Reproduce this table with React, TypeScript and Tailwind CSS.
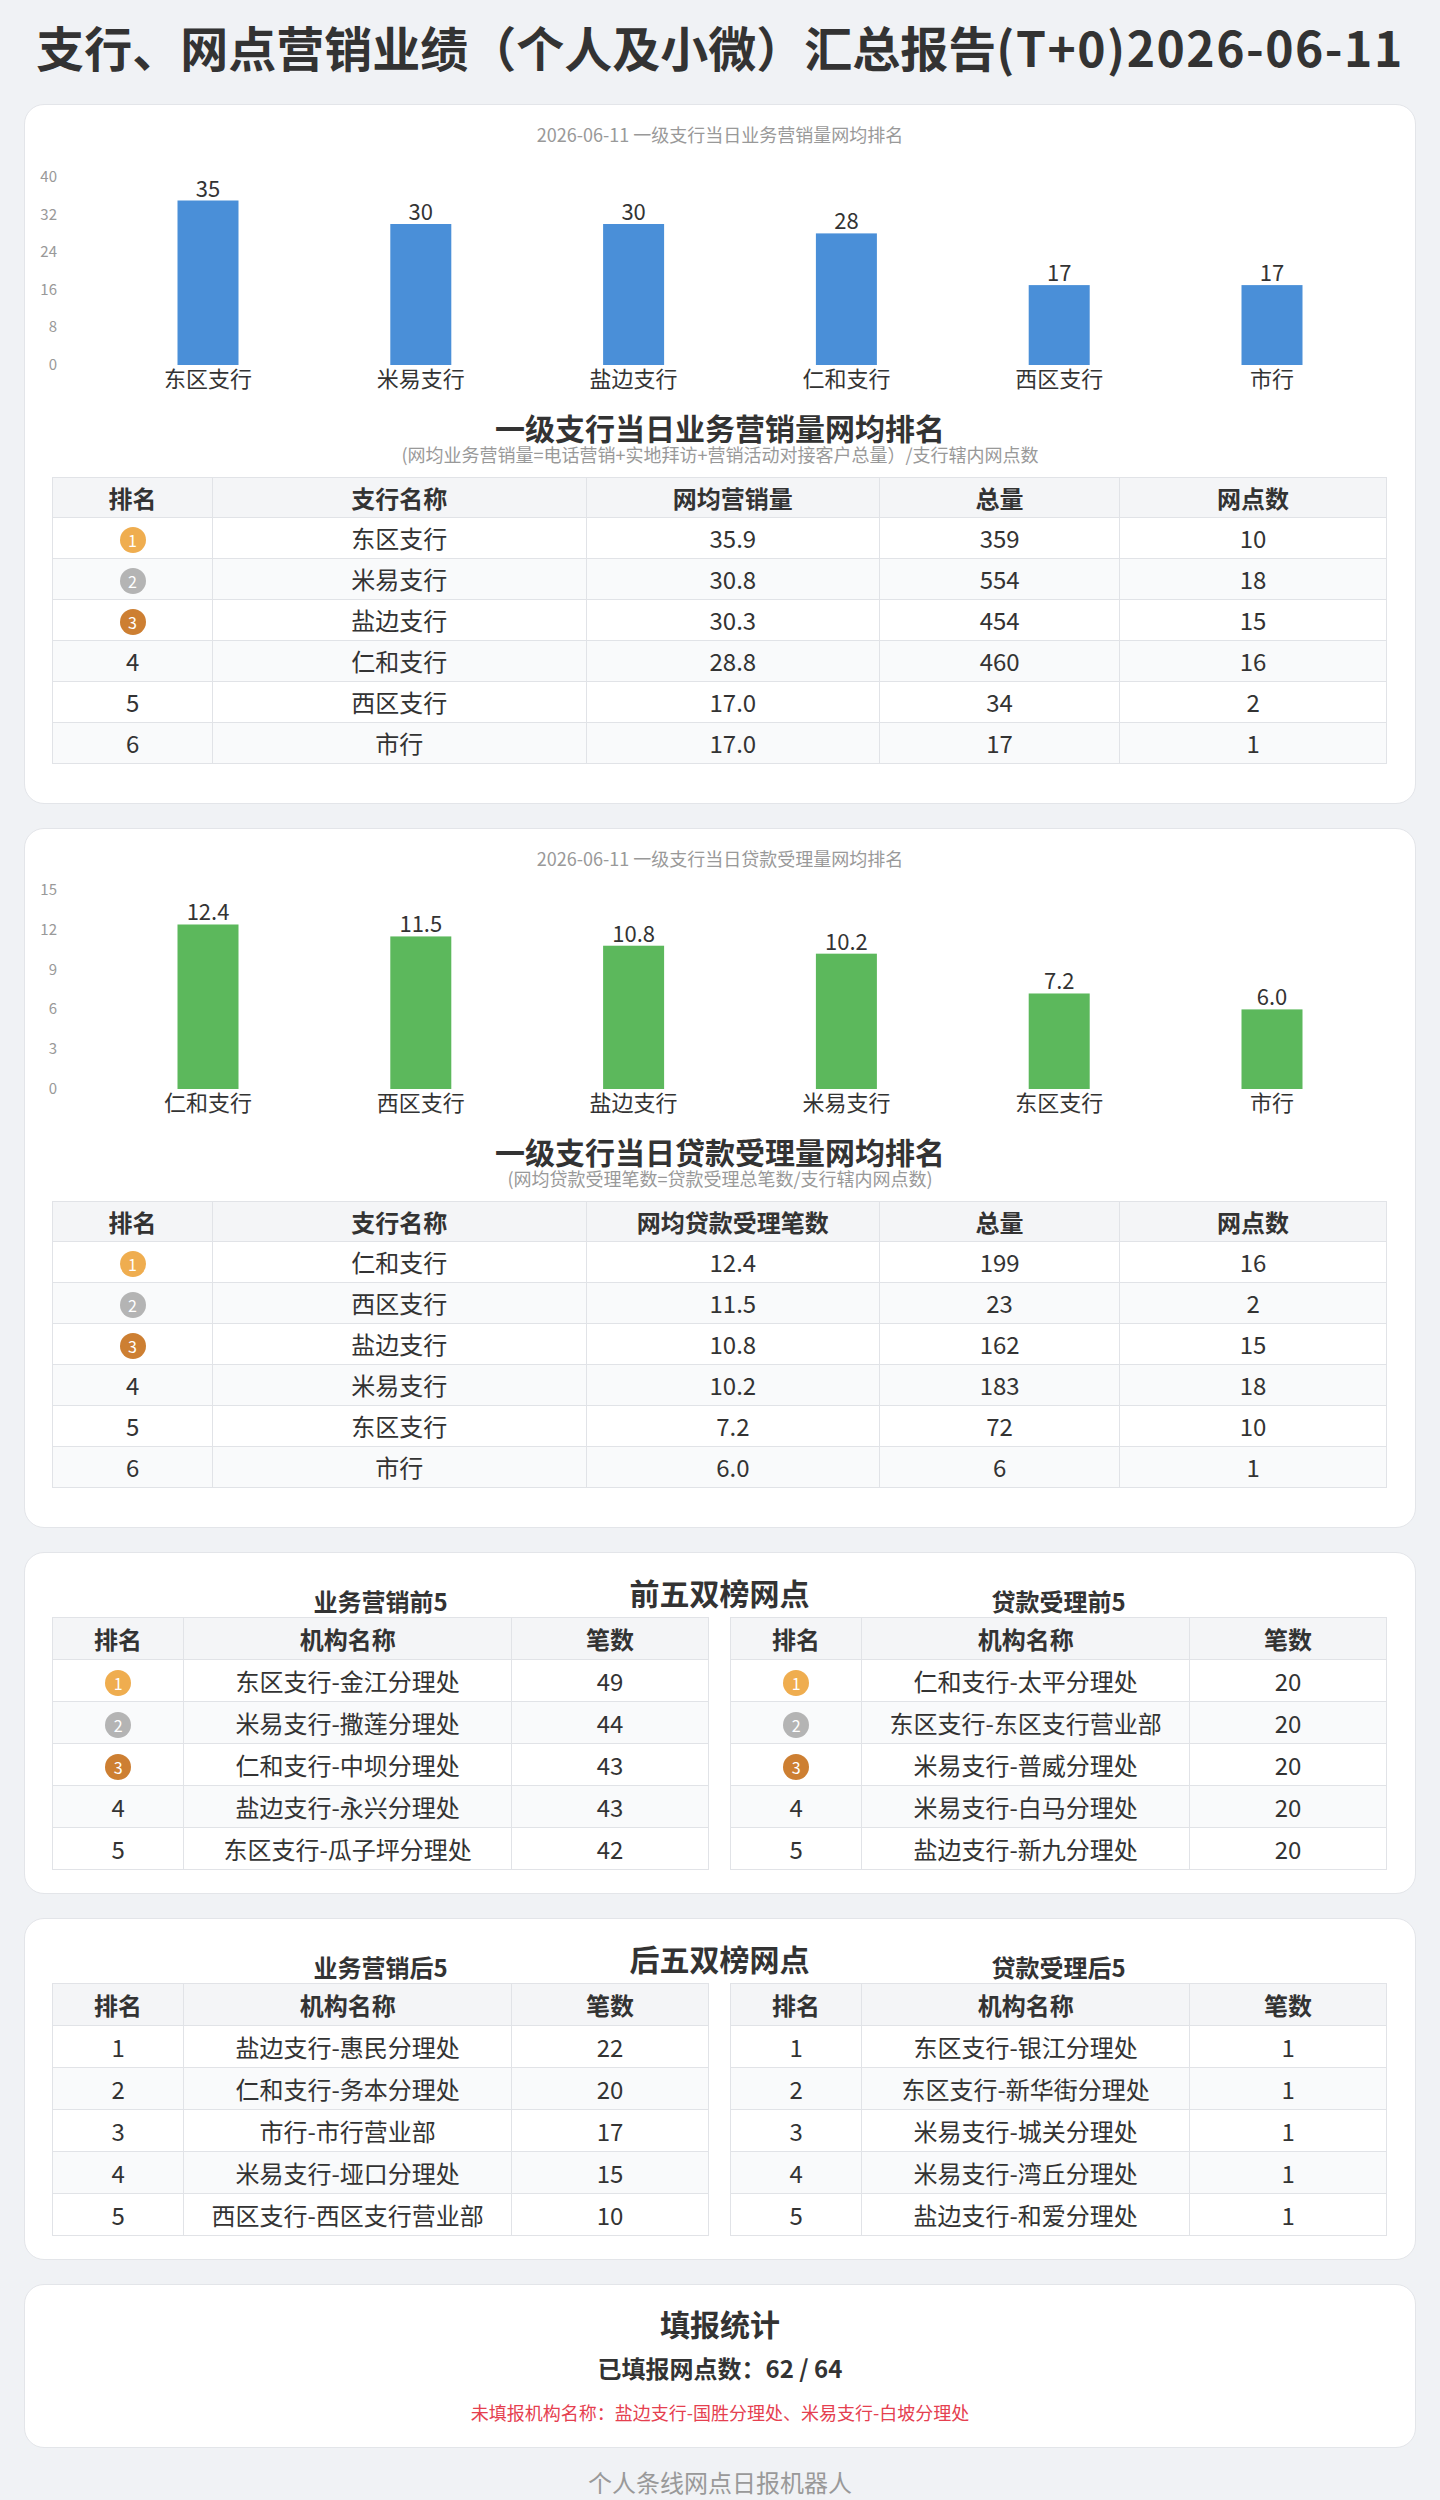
import React from 'react';

type ChartItem = { name: string; value: number; label: string };

type BranchRow = { name: string; avg: string; total: number; count: number };

type OutletRow = { name: string; count: number };

const salesChart: ChartItem[] = [
    { name: '东区支行', value: 35, label: '35' },
    { name: '米易支行', value: 30, label: '30' },
    { name: '盐边支行', value: 30, label: '30' },
    { name: '仁和支行', value: 28, label: '28' },
    { name: '西区支行', value: 17, label: '17' },
    { name: '市行', value: 17, label: '17' },
];

const loanChart: ChartItem[] = [
    { name: '仁和支行', value: 12.4, label: '12.4' },
    { name: '西区支行', value: 11.5, label: '11.5' },
    { name: '盐边支行', value: 10.8, label: '10.8' },
    { name: '米易支行', value: 10.2, label: '10.2' },
    { name: '东区支行', value: 7.2, label: '7.2' },
    { name: '市行', value: 6.0, label: '6.0' },
];

const salesRows: BranchRow[] = [
    { name: '东区支行', avg: '35.9', total: 359, count: 10 },
    { name: '米易支行', avg: '30.8', total: 554, count: 18 },
    { name: '盐边支行', avg: '30.3', total: 454, count: 15 },
    { name: '仁和支行', avg: '28.8', total: 460, count: 16 },
    { name: '西区支行', avg: '17.0', total: 34, count: 2 },
    { name: '市行', avg: '17.0', total: 17, count: 1 },
];

const loanRows: BranchRow[] = [
    { name: '仁和支行', avg: '12.4', total: 199, count: 16 },
    { name: '西区支行', avg: '11.5', total: 23, count: 2 },
    { name: '盐边支行', avg: '10.8', total: 162, count: 15 },
    { name: '米易支行', avg: '10.2', total: 183, count: 18 },
    { name: '东区支行', avg: '7.2', total: 72, count: 10 },
    { name: '市行', avg: '6.0', total: 6, count: 1 },
];

const salesTop: OutletRow[] = [
    { name: '东区支行-金江分理处', count: 49 },
    { name: '米易支行-撒莲分理处', count: 44 },
    { name: '仁和支行-中坝分理处', count: 43 },
    { name: '盐边支行-永兴分理处', count: 43 },
    { name: '东区支行-瓜子坪分理处', count: 42 },
];

const loanTop: OutletRow[] = [
    { name: '仁和支行-太平分理处', count: 20 },
    { name: '东区支行-东区支行营业部', count: 20 },
    { name: '米易支行-普威分理处', count: 20 },
    { name: '米易支行-白马分理处', count: 20 },
    { name: '盐边支行-新九分理处', count: 20 },
];

const salesBottom: OutletRow[] = [
    { name: '盐边支行-惠民分理处', count: 22 },
    { name: '仁和支行-务本分理处', count: 20 },
    { name: '市行-市行营业部', count: 17 },
    { name: '米易支行-垭口分理处', count: 15 },
    { name: '西区支行-西区支行营业部', count: 10 },
];

const loanBottom: OutletRow[] = [
    { name: '东区支行-银江分理处', count: 1 },
    { name: '东区支行-新华街分理处', count: 1 },
    { name: '米易支行-城关分理处', count: 1 },
    { name: '米易支行-湾丘分理处', count: 1 },
    { name: '盐边支行-和爱分理处', count: 1 },
];

// Rank badge: medals for the first three places
function Rank({ rank, medal }: { rank: number; medal: boolean }) {
    if (!medal || rank > 3) return <span>{rank}</span>;
    const colors: Record<number, string> = {
        1: 'bg-[#efad4f]',
        2: 'bg-[#b4b4b4]',
        3: 'bg-[#cd7f32]',
    };
    return (
        <span
            className={`inline-flex h-[26px] w-[26px] items-center justify-center rounded-full align-middle text-[16px] leading-none text-white ${colors[rank]}`}
        >
            {rank}
        </span>
    );
}

// Bar chart drawn as svg, sized to the card
function BarChart({
    title,
    data,
    color,
    max,
    axisTop,
}: {
    title: string;
    data: ChartItem[];
    color: string;
    max: number;
    axisTop: number;
}) {
    const baseline = 219;
    const span = baseline - axisTop;
    const ticks = [0, 1, 2, 3, 4, 5].map((i) => (max / 5) * i);

    return (
        <div>
            <div className="pt-[17px] text-center text-[18px] leading-[24px] text-[#999]">{title}</div>
            <svg width="1390" height="264" className="block">
                {ticks.map((t) => (
                    <text
                        key={t}
                        x={32}
                        y={baseline - (t / max) * span + 5}
                        textAnchor="end"
                        fontSize={15}
                        fill="#999"
                    >
                        {t}
                    </text>
                ))}
                {data.map((d, i) => {
                    const cx = 183 + i * 212.8;
                    const h = (d.value / max) * span;
                    return (
                        <g key={d.name}>
                            <rect x={cx - 30.5} y={baseline - h} width={61} height={h} fill={color} />
                            <text x={cx} y={baseline - h - 4} textAnchor="middle" fontSize={22} fill="#333">
                                {d.label}
                            </text>
                            <text x={cx} y={241} textAnchor="middle" fontSize={22} fill="#333">
                                {d.name}
                            </text>
                        </g>
                    );
                })}
            </svg>
        </div>
    );
}

function BranchTable({ avgHeader, rows }: { avgHeader: string; rows: BranchRow[] }) {
    return (
        <table className="w-full table-fixed border-collapse text-center text-[24px] text-[#333]">
            <colgroup>
                <col className="w-[12%]" />
                <col className="w-[28%]" />
                <col className="w-[22%]" />
                <col className="w-[18%]" />
                <col className="w-[20%]" />
            </colgroup>
            <thead>
                <tr className="h-[40px] bg-[#f4f5f7]">
                    <th className="border border-[#e1e3e7] p-0 font-bold leading-[28px]">排名</th>
                    <th className="border border-[#e1e3e7] p-0 font-bold leading-[28px]">支行名称</th>
                    <th className="border border-[#e1e3e7] p-0 font-bold leading-[28px]">{avgHeader}</th>
                    <th className="border border-[#e1e3e7] p-0 font-bold leading-[28px]">总量</th>
                    <th className="border border-[#e1e3e7] p-0 font-bold leading-[28px]">网点数</th>
                </tr>
            </thead>
            <tbody>
                {rows.map((r, i) => (
                    <tr key={r.name} className={`h-[41px] ${i % 2 === 1 ? 'bg-[#f9fafb]' : 'bg-white'}`}>
                        <td className="border border-[#e1e3e7] p-0 leading-[28px]">
                            <Rank rank={i + 1} medal />
                        </td>
                        <td className="border border-[#e1e3e7] p-0 leading-[28px]">{r.name}</td>
                        <td className="border border-[#e1e3e7] p-0 leading-[28px]">{r.avg}</td>
                        <td className="border border-[#e1e3e7] p-0 leading-[28px]">{r.total}</td>
                        <td className="border border-[#e1e3e7] p-0 leading-[28px]">{r.count}</td>
                    </tr>
                ))}
            </tbody>
        </table>
    );
}

function OutletTable({ caption, rows, medal }: { caption: string; rows: OutletRow[]; medal: boolean }) {
    return (
        <div>
            <div className="mb-[1px] text-center text-[24px] font-bold leading-[30px] text-[#333]">{caption}</div>
            <table className="w-full table-fixed border-collapse text-center text-[24px] text-[#333]">
                <colgroup>
                    <col className="w-[20%]" />
                    <col className="w-[50%]" />
                    <col className="w-[30%]" />
                </colgroup>
                <thead>
                    <tr className="h-[42px] bg-[#f4f5f7]">
                        <th className="border border-[#e1e3e7] p-0 font-bold leading-[28px]">排名</th>
                        <th className="border border-[#e1e3e7] p-0 font-bold leading-[28px]">机构名称</th>
                        <th className="border border-[#e1e3e7] p-0 font-bold leading-[28px]">笔数</th>
                    </tr>
                </thead>
                <tbody>
                    {rows.map((r, i) => (
                        <tr key={r.name} className={`h-[42px] ${i % 2 === 1 ? 'bg-[#f9fafb]' : 'bg-white'}`}>
                            <td className="border border-[#e1e3e7] p-0 leading-[28px]">
                                <Rank rank={i + 1} medal={medal} />
                            </td>
                            <td className="whitespace-nowrap border border-[#e1e3e7] p-0 leading-[28px]">{r.name}</td>
                            <td className="border border-[#e1e3e7] p-0 leading-[28px]">{r.count}</td>
                        </tr>
                    ))}
                </tbody>
            </table>
        </div>
    );
}

function Card({ children, className = '' }: { children: React.ReactNode; className?: string }) {
    return (
        <div className={`rounded-[20px] border border-[#e3e5e9] bg-white ${className}`}>{children}</div>
    );
}

export default function App() {
    return (
        <div className="min-h-screen bg-[#f0f2f5] px-6 font-['Noto_Sans_CJK_SC','Noto_Sans',sans-serif] text-[#333]">
            {/* Header */}
            <h1 className="pt-[16px] pb-[28px] text-center text-[48px] font-bold leading-[60px] text-[#333]">
                支行、网点营销业绩（个人及小微）汇总报告<span className="tracking-[1.5px]">(T+0)2026-06-11</span>
            </h1>

            <div className="flex flex-col gap-6">
                {/* Sales ranking */}
                <Card className="h-[700px]">
                    <BarChart
                        title="2026-06-11 一级支行当日业务营销量网均排名"
                        data={salesChart}
                        color="#4a8fd8"
                        max={40}
                        axisTop={31}
                    />
                    <h2 className="text-center text-[30px] font-bold leading-[34px]">一级支行当日业务营销量网均排名</h2>
                    <p className="text-center text-[18px] leading-[20px] text-[#999]">
                        (网均业务营销量=电话营销+实地拜访+营销活动对接客户总量）/支行辖内网点数
                    </p>
                    <div className="mt-[13px] pl-[27px] pr-[28px]">
                        <BranchTable avgHeader="网均营销量" rows={salesRows} />
                    </div>
                </Card>

                {/* Loan ranking */}
                <Card className="h-[700px]">
                    <BarChart
                        title="2026-06-11 一级支行当日贷款受理量网均排名"
                        data={loanChart}
                        color="#5cb85c"
                        max={15}
                        axisTop={20}
                    />
                    <h2 className="text-center text-[30px] font-bold leading-[34px]">一级支行当日贷款受理量网均排名</h2>
                    <p className="text-center text-[18px] leading-[20px] text-[#999]">
                        (网均贷款受理笔数=贷款受理总笔数/支行辖内网点数)
                    </p>
                    <div className="mt-[13px] pl-[27px] pr-[28px]">
                        <BranchTable avgHeader="网均贷款受理笔数" rows={loanRows} />
                    </div>
                </Card>

                {/* Top five */}
                <Card className="pt-[21px] pb-[23px] pl-[27px] pr-[28px]">
                    <h2 className="-mb-[24px] text-center text-[30px] font-bold leading-[36px]">前五双榜网点</h2>
                    <div className="grid grid-cols-2 gap-[21px]">
                        <OutletTable caption="业务营销前5" rows={salesTop} medal />
                        <OutletTable caption="贷款受理前5" rows={loanTop} medal />
                    </div>
                </Card>

                {/* Bottom five */}
                <Card className="pt-[21px] pb-[23px] pl-[27px] pr-[28px]">
                    <h2 className="-mb-[24px] text-center text-[30px] font-bold leading-[36px]">后五双榜网点</h2>
                    <div className="grid grid-cols-2 gap-[21px]">
                        <OutletTable caption="业务营销后5" rows={salesBottom} medal={false} />
                        <OutletTable caption="贷款受理后5" rows={loanBottom} medal={false} />
                    </div>
                </Card>

                {/* Reporting stats */}
                <Card className="pt-[20px] pb-[23px] text-center">
                    <h2 className="text-[30px] font-bold leading-[36px]">填报统计</h2>
                    <p className="mt-[11px] text-[24px] font-bold leading-[32px]">已填报网点数：62 / 64</p>
                    <p className="mt-[16px] text-[18px] leading-[24px] text-[#e5404f]">
                        未填报机构名称：盐边支行-国胜分理处、米易支行-白坡分理处
                    </p>
                </Card>
            </div>

            <footer className="pt-[18px] pb-[20px] text-center text-[24px] leading-[32px] text-[#999]">
                个人条线网点日报机器人
            </footer>
        </div>
    );
}
